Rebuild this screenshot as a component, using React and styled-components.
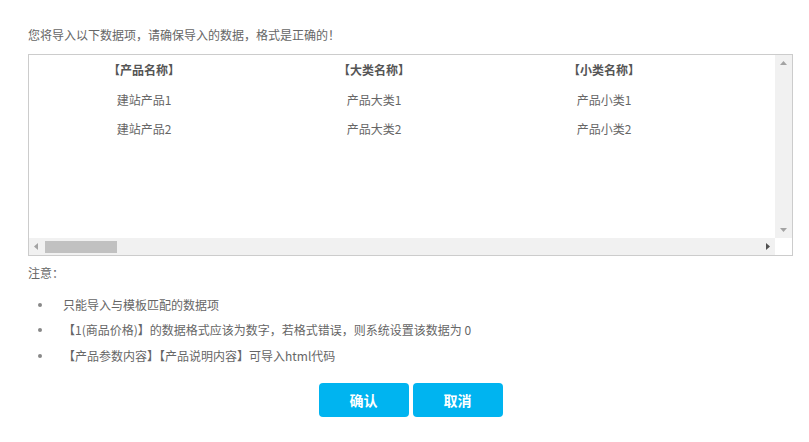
import React from "react";
import styled, { createGlobalStyle } from "styled-components";

const Global = createGlobalStyle`
  html, body { margin: 0; padding: 0; background: #fff; }
  body { font-family: "Noto Sans CJK SC", "Noto Sans", sans-serif; }
`;

const Page = styled.div`
  width: 765px;
  padding: 26px 0 0 28px;
  color: #666;
  font-size: 12px;
`;

const Intro = styled.p`
  margin: 0 0 10px;
  line-height: 18px;
`;

const Box = styled.div`
  box-sizing: border-box;
  width: 765px;
  height: 202px;
  border: 1px solid #ccc;
  display: grid;
  grid-template-columns: 1fr 17px;
  grid-template-rows: 1fr 17px;
`;

const Viewport = styled.div`
  overflow: hidden;
`;

const Table = styled.div`
  display: grid;
  grid-template-columns: repeat(${(p) => p.$cols}, 230px);
  grid-auto-rows: 29px;
  grid-template-rows: 30px;
  width: max-content;
`;

const Cell = styled.div`
  display: flex;
  align-items: center;
  justify-content: center;
  white-space: nowrap;
  line-height: 18px;
  color: ${(p) => (p.$head ? "#555" : "#666")};
  font-weight: ${(p) => (p.$head ? 700 : 400)};
`;

const VTrack = styled.div`
  background: #f1f1f1;
  display: flex;
  flex-direction: column;
  justify-content: space-between;
  align-items: center;
  padding: 6px 0;
`;

const HTrack = styled.div`
  background: #f1f1f1;
  display: flex;
  align-items: center;
  padding: 0 5px 0 5px;
`;

const Thumb = styled.div`
  width: 72px;
  height: 12px;
  background: #c1c1c1;
  margin-left: 7px;
`;

const Corner = styled.div`
  background: #fff;
`;

const Spacer = styled.div`
  flex: 1;
`;

const Arrow = ({ dir, color }) => {
  const pts = {
    up: "0,4 7,4 3.5,0",
    down: "0,0 7,0 3.5,4",
    left: "4,0 4,7 0,3.5",
    right: "0,0 0,7 4,3.5",
  }[dir];
  const vertical = dir === "up" || dir === "down";
  return (
    <svg width={vertical ? 7 : 4} height={vertical ? 4 : 7} viewBox={vertical ? "0 0 7 4" : "0 0 4 7"}>
      <polygon points={pts} fill={color} />
    </svg>
  );
};

const NoteTitle = styled.div`
  margin-top: 8px;
  line-height: 18px;
`;

const List = styled.ul`
  list-style: none;
  margin: 10px 0 0;
  padding: 0;
`;

const Item = styled.li`
  display: flex;
  align-items: center;
  height: 25.5px;
  line-height: 18px;
  white-space: nowrap;
  &::before {
    content: "";
    width: 4px;
    height: 4px;
    border-radius: 50%;
    background: #888;
    margin: 0 21px 0 10px;
    flex: none;
  }
`;

const Actions = styled.div`
  display: flex;
  justify-content: center;
  gap: 4px;
  margin-top: 14px;
`;

const Button = styled.button`
  width: 90px;
  height: 34px;
  border: none;
  border-radius: 4px;
  background: #00b4f0;
  color: #fff;
  font-family: "Noto Sans CJK SC", sans-serif;
  font-size: 14px;
  font-weight: 700;
  cursor: pointer;
  padding: 0;
`;

const headers = ["【产品名称】", "【大类名称】", "【小类名称】"];
const rows = [
  ["建站产品1", "产品大类1", "产品小类1"],
  ["建站产品2", "产品大类2", "产品小类2"],
];

export default function App() {
  return (
    <>
      <Global />
      <Page>
        <Intro>您将导入以下数据项，请确保导入的数据，格式是正确的！</Intro>
        <Box>
          <Viewport>
            <Table $cols={headers.length}>
              {headers.map((h) => (
                <Cell key={h} $head>{h}</Cell>
              ))}
              {rows.map((r, i) =>
                r.map((c, j) => <Cell key={`${i}-${j}`}>{c}</Cell>)
              )}
            </Table>
          </Viewport>
          <VTrack>
            <Arrow dir="up" color="#a3a3a3" />
            <Arrow dir="down" color="#a3a3a3" />
          </VTrack>
          <HTrack>
            <Arrow dir="left" color="#a3a3a3" />
            <Thumb />
            <Spacer />
            <Arrow dir="right" color="#505050" />
          </HTrack>
          <Corner />
        </Box>
        <NoteTitle>注意：</NoteTitle>
        <List>
          <Item>只能导入与模板匹配的数据项</Item>
          <Item>【1(商品价格)】的数据格式应该为数字，若格式错误，则系统设置该数据为 0</Item>
          <Item>【产品参数内容】【产品说明内容】可导入html代码</Item>
        </List>
        <Actions>
          <Button>确认</Button>
          <Button>取消</Button>
        </Actions>
      </Page>
    </>
  );
}
